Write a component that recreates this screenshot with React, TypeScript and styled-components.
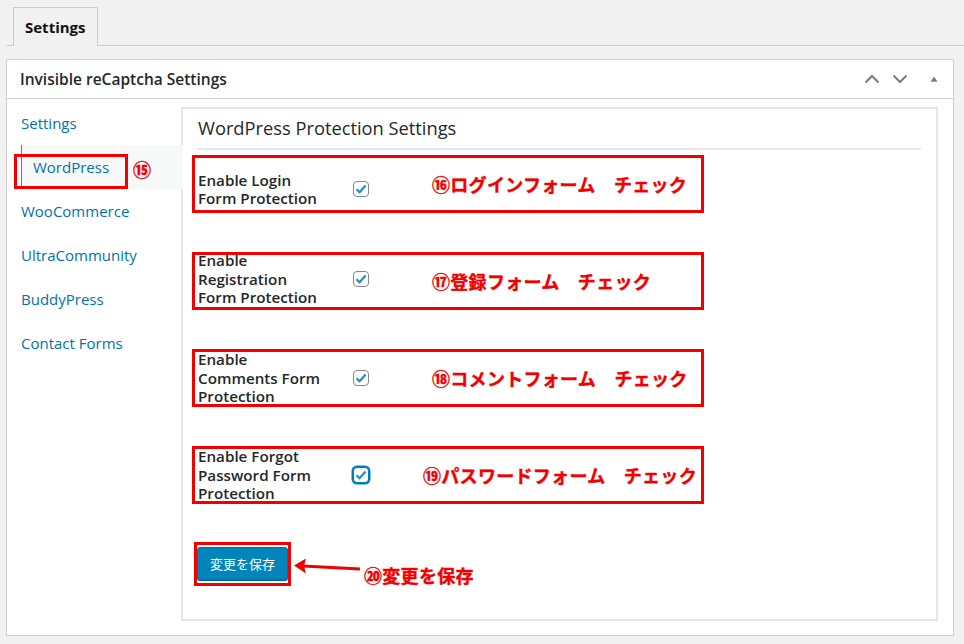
import React, { FC } from 'react';
import styled, { createGlobalStyle } from 'styled-components';

const GlobalStyle = createGlobalStyle`
  html, body {
    margin: 0;
    padding: 0;
    background: #f1f1f1;
  }
  body {
    font-family: "Open Sans", "Noto Sans", "Noto Sans CJK JP", sans-serif;
    color: #23282d;
  }
  * {
    box-sizing: border-box;
  }
`;

const JP = `"Noto Sans CJK JP", "Noto Sans", sans-serif`;

const Page = styled.div`
  width: 964px;
  height: 644px;
  padding: 7px 10px 0 6px;
  overflow: hidden;
`;

const TabBar = styled.div`
  display: flex;
  padding-left: 7px;
  margin-right: -10px;
  border-bottom: 1px solid #cccccc;
`;

const Tab = styled.div`
  height: 39px;
  margin-bottom: -1px;
  padding: 0 11px;
  border: 1px solid #cccccc;
  border-bottom: none;
  background: #f1f1f1;
  font-size: 15px;
  font-weight: 700;
  line-height: 38px;
  color: #111;
`;

const Postbox = styled.div`
  margin-top: 13px;
  height: 577px;
  border: 1px solid #ccd0d4;
  background: #fff;
  display: flex;
  flex-direction: column;
`;

const PostboxHeader = styled.div`
  height: 39px;
  display: flex;
  align-items: center;
  padding: 0 15px 0 13px;
  border-bottom: 1px solid #ccd0d4;
`;

const PostboxTitle = styled.h2`
  flex: 1;
  margin: 0;
  font-size: 15.5px;
  font-weight: 600;
  color: #23282d;
`;

const HeaderIcon = styled.svg<{ $gap: number }>`
  display: block;
  margin-right: ${p => p.$gap}px;
  color: #787c82;
`;

const PostboxBody = styled.div`
  flex: 1;
  display: flex;
  align-items: flex-start;
  padding: 8px 15px 14px 0;
`;

const Nav = styled.ul`
  width: 174px;
  margin: -6px 0 0;
  padding: 0;
  list-style: none;
`;

const NavItem = styled.li<{ $active?: boolean }>`
  position: relative;
  height: 44px;
  display: flex;
  align-items: center;
  font-size: 15px;
  color: #0073aa;
  padding-left: ${p => (p.$active ? '11px' : '14px')};
  margin-left: ${p => (p.$active ? '14px' : '0')};
  margin-right: ${p => (p.$active ? '-2px' : '0')};
  background: ${p => (p.$active ? '#f6f8fa' : 'transparent')};
  border-left: ${p => (p.$active ? '1px solid #2e8ac2' : 'none')};
  z-index: ${p => (p.$active ? 1 : 0)};
`;

const NavHighlight = styled.span`
  position: absolute;
  left: -8px;
  top: 9px;
  width: 114px;
  height: 35px;
  border: 3px solid #f20000;
`;

const NavBadge = styled.span`
  position: absolute;
  left: 111px;
  top: 12px;
  font-family: ${JP};
  font-weight: 700;
  font-size: 18px;
  line-height: 24px;
  color: #f20000;
  -webkit-text-stroke: 0.4px #f20000;
`;

const Panel = styled.div`
  flex: 1;
  align-self: stretch;
  border: 2px solid #e6e6e6;
  display: flex;
  flex-direction: column;
`;

const PanelHeading = styled.h3`
  margin: 0 15px 0 14px;
  padding: 7px 0 8px 1px;
  border-bottom: 2px solid #e8e8e8;
  font-size: 18.3px;
  font-weight: 400;
  line-height: 24px;
  color: #23282d;
`;

const Rows = styled.div`
  display: flex;
  flex-direction: column;
  gap: 39px;
  margin: 5px 0 0 9px;
`;

const RowBox = styled.div`
  width: 512px;
  height: 58px;
  border: 3px solid #f20000;
  display: flex;
  align-items: center;
`;

const Field = styled.div<{ $shift: number }>`
  display: flex;
  align-items: center;
  margin-top: ${p => p.$shift * 2}px;
`;

const Label = styled.div`
  width: 158px;
  padding-left: 3px;
  font-size: 15.2px;
  font-weight: 600;
  line-height: 18.5px;
  white-space: nowrap;
  color: #23282d;
`;

const Check = styled.span<{ $focus?: boolean }>`
  width: 16px;
  height: 16px;
  display: flex;
  align-items: center;
  justify-content: center;
  border: 1px solid ${p => (p.$focus ? '#007cba' : '#7e8993')};
  border-radius: 4px;
  background: #fff;
  box-shadow: ${p => (p.$focus ? '0 0 0 1.5px #007cba' : 'none')};
`;

const Note = styled.span<{ $left: number }>`
  margin-left: ${p => p.$left}px;
  font-family: ${JP};
  font-weight: 700;
  font-size: 18px;
  line-height: 26px;
  letter-spacing: 0.3px;
  color: #f20000;
  -webkit-text-stroke: 0.4px #f20000;
  white-space: pre;
`;

const SaveRow = styled.div`
  display: flex;
  align-items: flex-start;
  margin: 38px 0 0 11px;
`;

const SaveFrame = styled.div`
  border: 3px solid #f20000;
  padding: 2px 0 3px 0;
`;

const SaveButton = styled.button`
  display: block;
  width: 91px;
  height: 33px;
  padding: 0;
  border: 1px solid #0073aa;
  border-radius: 3px;
  background: #0085ba;
  box-shadow: 0 1px 0 #006799;
  font-family: ${JP};
  font-size: 13px;
  color: #fff;
`;

const Arrow = styled.svg`
  display: block;
  margin: 15px 0 0 3px;
`;

const SaveNote = styled.span`
  margin: 20px 0 0 2px;
  font-family: ${JP};
  font-weight: 700;
  font-size: 18px;
  line-height: 26px;
  letter-spacing: 0.3px;
  color: #f20000;
  -webkit-text-stroke: 0.4px #f20000;
`;

const CheckMark: FC = () => (
  <svg width="12" height="10" viewBox="0 0 12 10">
    <path d="M1.5 5.2 L4.6 8.2 L10.6 1.6" fill="none" stroke="#1e8cbe" strokeWidth="2.2" />
  </svg>
);

type RowData = {
  lines: string[];
  note: string;
  shift: number;
  noteLeft: number;
  focus?: boolean;
};

const rows: RowData[] = [
  { lines: ['Enable Login', 'Form Protection'], note: '⑯ログインフォーム　チェック', shift: 5, noteLeft: 63 },
  { lines: ['Enable', 'Registration', 'Form Protection'], note: '⑰登録フォーム　チェック', shift: -2, noteLeft: 63 },
  { lines: ['Enable', 'Comments Form', 'Protection'], note: '⑱コメントフォーム　チェック', shift: 0, noteLeft: 63 },
  { lines: ['Enable Forgot', 'Password Form', 'Protection'], note: '⑲パスワードフォーム　チェック', shift: 0, noteLeft: 54, focus: true },
];

const navItems = ['Settings', 'WordPress', 'WooCommerce', 'UltraCommunity', 'BuddyPress', 'Contact Forms'];

const App: FC = () => (
  <>
    <GlobalStyle />
    <Page>
      <TabBar>
        <Tab>Settings</Tab>
      </TabBar>
      <Postbox>
        <PostboxHeader>
          <PostboxTitle>Invisible reCaptcha Settings</PostboxTitle>
          <HeaderIcon $gap={12} width="16" height="10" viewBox="0 0 16 10">
            <polyline points="1.5,8.5 8,2 14.5,8.5" fill="none" stroke="currentColor" strokeWidth="2" />
          </HeaderIcon>
          <HeaderIcon $gap={22} width="16" height="10" viewBox="0 0 16 10">
            <polyline points="1.5,1.5 8,8 14.5,1.5" fill="none" stroke="currentColor" strokeWidth="2" />
          </HeaderIcon>
          <HeaderIcon $gap={0} width="8" height="6" viewBox="0 0 8 6">
            <polygon points="0.5,5.8 4,0.5 7.5,5.8" fill="currentColor" />
          </HeaderIcon>
        </PostboxHeader>
        <PostboxBody>
          <Nav>
            {navItems.map(item =>
              item === 'WordPress' ? (
                <NavItem key={item} $active>
                  {item}
                  <NavHighlight />
                  <NavBadge>⑮</NavBadge>
                </NavItem>
              ) : (
                <NavItem key={item}>{item}</NavItem>
              )
            )}
          </Nav>
          <Panel>
            <PanelHeading>WordPress Protection Settings</PanelHeading>
            <Rows>
              {rows.map(row => (
                <RowBox key={row.note}>
                  <Field $shift={row.shift}>
                    <Label>
                      {row.lines.map((line, i) => (
                        <div key={i}>{line}</div>
                      ))}
                    </Label>
                    <Check $focus={row.focus}>
                      <CheckMark />
                    </Check>
                  </Field>
                  <Note $left={row.noteLeft}>{row.note}</Note>
                </RowBox>
              ))}
            </Rows>
            <SaveRow>
              <SaveFrame>
                <SaveButton>変更を保存</SaveButton>
              </SaveFrame>
              <Arrow width="68" height="20" viewBox="0 0 68 20">
                <line x1="9" y1="9" x2="66" y2="12" stroke="#f20000" strokeWidth="3.2" />
                <polygon points="0,8.5 12,1.5 10,9 12,16.5" fill="#f20000" />
              </Arrow>
              <SaveNote>⑳変更を保存</SaveNote>
            </SaveRow>
          </Panel>
        </PostboxBody>
      </Postbox>
    </Page>
  </>
);

export default App;
